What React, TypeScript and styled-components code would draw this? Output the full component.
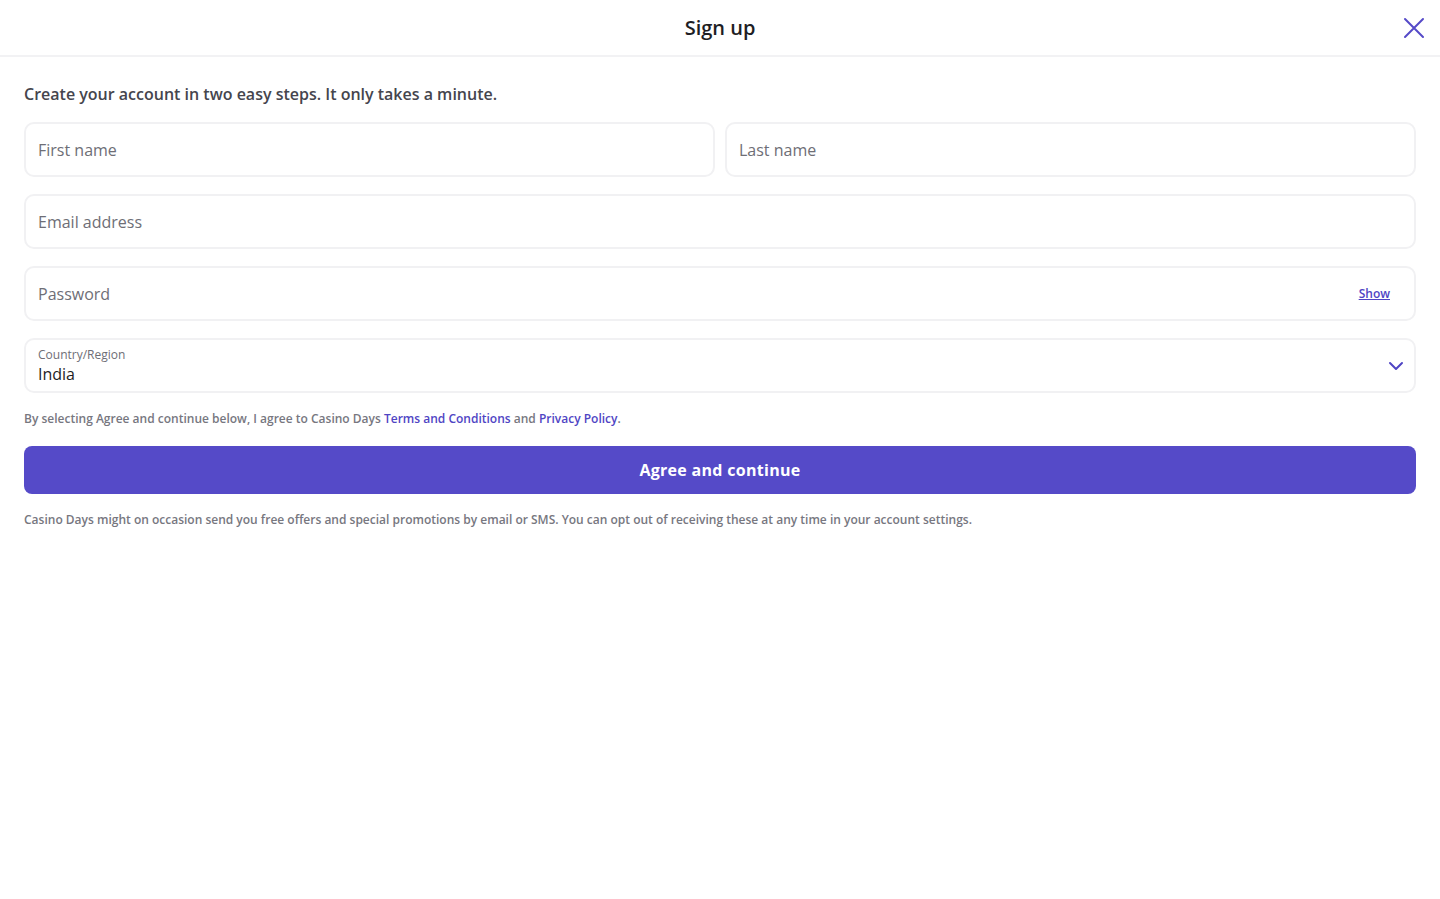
import React from 'react';
import styled, { createGlobalStyle } from 'styled-components';

const GlobalStyle = createGlobalStyle`
  html, body {
    margin: 0;
    padding: 0;
    background: #fff;
    font-family: "Open Sans", "Noto Sans", sans-serif;
  }
  * { box-sizing: border-box; }
`;

const Page = styled.div`
  width: 100%;
  min-height: 899px;
  background: #fff;
`;

const Header = styled.header`
  height: 57px;
  border-bottom: 2px solid #f2f2f4;
  display: flex;
  align-items: center;
  justify-content: center;
  position: relative;
`;

const Title = styled.h1`
  margin: 0;
  font-size: 20px;
  font-weight: 600;
  color: #1e1e24;
`;

const CloseButton = styled.button`
  position: absolute;
  right: 14px;
  top: 16px;
  width: 24px;
  height: 24px;
  padding: 0;
  border: none;
  background: none;
  display: flex;
  align-items: center;
  justify-content: center;
  cursor: pointer;
`;

const Body = styled.main`
  padding: 26px 24px;
  display: flex;
  flex-direction: column;
`;

const Intro = styled.p`
  margin: 0 0 17px;
  font-size: 16px;
  font-weight: 600;
  color: #45454d;
  line-height: 22px;
`;

const Row = styled.div`
  display: grid;
  grid-template-columns: 1fr 1fr;
  gap: 10px;
  margin-bottom: 17px;
`;

const Field = styled.div<{ $select?: boolean }>`
  height: 55px;
  border: 2px solid #f1f1f3;
  border-radius: 10px;
  display: flex;
  align-items: center;
  padding: ${(p) => (p.$select ? '0 10px 0 12px' : '0 24px 0 12px')};
  margin-bottom: 17px;
  background: #fff;
  ${Row} & { margin-bottom: 0; }
`;

const Placeholder = styled.span`
  flex: 1;
  font-size: 16px;
  color: #6e6e76;
`;

const ShowLink = styled.a`
  font-size: 12px;
  font-weight: 600;
  color: #4f45c4;
  text-decoration: underline;
`;

const SelectBody = styled.div`
  flex: 1;
  display: flex;
  flex-direction: column;
`;

const SelectLabel = styled.span`
  font-size: 12px;
  color: #6e6e76;
  line-height: 16px;
`;

const SelectValue = styled.span`
  font-size: 16px;
  color: #1e1e24;
  line-height: 22px;
`;

const Legal = styled.p`
  margin: 1px 0 19px;
  font-size: 12px;
  font-weight: 600;
  color: #77777f;
  line-height: 16px;
`;

const Link = styled.a`
  color: #4f45c4;
  text-decoration: none;
`;

const PrimaryButton = styled.button`
  height: 48px;
  width: 100%;
  border: none;
  border-radius: 8px;
  background: #554ac8;
  color: #fff;
  font-family: inherit;
  font-size: 16px;
  font-weight: 700;
  letter-spacing: 0.3px;
  cursor: pointer;
`;

const Footnote = styled.p`
  margin: 18px 0 0;
  font-size: 12px;
  font-weight: 600;
  color: #77777f;
  line-height: 16px;
`;

const App = () => {
  return (
    <Page>
      <GlobalStyle />
      <Header>
        <Title>Sign up</Title>
        <CloseButton aria-label="Close">
          <svg width="22" height="22" viewBox="0 0 22 22" fill="none">
            <path d="M2 2L20 20M20 2L2 20" stroke="#554ac8" strokeWidth="2" strokeLinecap="round" />
          </svg>
        </CloseButton>
      </Header>
      <Body>
        <Intro>Create your account in two easy steps. It only takes a minute.</Intro>
        <Row>
          <Field><Placeholder>First name</Placeholder></Field>
          <Field><Placeholder>Last name</Placeholder></Field>
        </Row>
        <Field><Placeholder>Email address</Placeholder></Field>
        <Field>
          <Placeholder>Password</Placeholder>
          <ShowLink href="#">Show</ShowLink>
        </Field>
        <Field $select>
          <SelectBody>
            <SelectLabel>Country/Region</SelectLabel>
            <SelectValue>India</SelectValue>
          </SelectBody>
          <svg width="16" height="10" viewBox="0 0 16 10" fill="none">
            <path d="M2 2L8 8L14 2" stroke="#4f45c4" strokeWidth="2" strokeLinecap="round" strokeLinejoin="round" />
          </svg>
        </Field>
        <Legal>
          By selecting Agree and continue below, I agree to Casino Days{' '}
          <Link href="#">Terms and Conditions</Link> and <Link href="#">Privacy Policy</Link>.
        </Legal>
        <PrimaryButton>Agree and continue</PrimaryButton>
        <Footnote>
          Casino Days might on occasion send you free offers and special promotions by email or SMS. You can opt out of receiving these at any time in your account settings.
        </Footnote>
      </Body>
    </Page>
  );
};

export default App;
